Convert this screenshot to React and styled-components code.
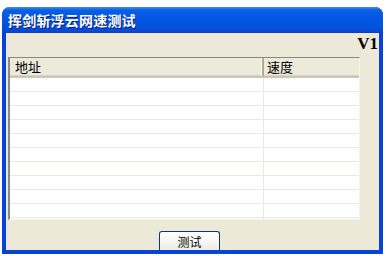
import React from 'react';
import styled, { createGlobalStyle } from 'styled-components';

const GlobalStyle = createGlobalStyle`
  html, body {
    margin: 0;
    background: #ffffff;
  }
  body {
    width: 386px;
    height: 256px;
    overflow: hidden;
    font-family: "Noto Sans CJK SC", "Noto Sans", sans-serif;
  }
`;

const Page = styled.div`
  padding: 7px 3px 2px 2px;
`;

const Window = styled.div`
  width: 381px;
  height: 247px;
  display: flex;
  flex-direction: column;
  border-radius: 8px 8px 0 0;
  background: #0842d6;
  overflow: hidden;
`;

const TitleBar = styled.div`
  height: 26px;
  flex: none;
  display: flex;
  align-items: center;
  padding: 0 6px;
  background: linear-gradient(
    to bottom,
    #3d8cf6 0%,
    #0a5fe6 12%,
    #0256e0 45%,
    #0053de 70%,
    #0a4ad4 92%,
    #0b3dbd 100%
  );
`;

const Title = styled.span`
  color: #ffffff;
  font-size: 14px;
  font-weight: bold;
  letter-spacing: 0.2px;
  text-shadow: 1px 1px 0 #0a1e74;
  font-family: "Noto Sans CJK SC", sans-serif;
`;

const Client = styled.div`
  flex: 1;
  margin: 0 4px 4px 4px;
  background: #ece9d8;
  display: flex;
  flex-direction: column;
`;

const VersionRow = styled.div`
  display: flex;
  justify-content: flex-end;
  height: 24px;
  padding-right: 1px;
`;

const Version = styled.span`
  font-family: "Liberation Serif", "DejaVu Serif", serif;
  font-weight: bold;
  font-size: 17px;
  line-height: 22px;
  color: #000000;
`;

const ListView = styled.div`
  margin-left: 2px;
  width: 352px;
  height: 163px;
  background: #ffffff;
  border-top: 1px solid #8c8a80;
  border-left: 2px solid #8c8a80;
  border-right: 1px solid #f4f3ee;
  border-bottom: 1px solid #f4f3ee;
  box-sizing: border-box;
  overflow: hidden;
`;

const HeaderRow = styled.div`
  display: grid;
  grid-template-columns: 254px 1fr;
  height: 18px;
  background: #ebeadb;
  border-bottom: 2px solid #cbc7b8;
  box-shadow: inset 0 -1px 0 #d6d2c2;
`;

const HeaderCell = styled.div`
  font-size: 13px;
  line-height: 18px;
  padding-left: ${p => p.$pad || 4}px;
  color: #000000;
  border-right: ${p => (p.$divider ? '2px solid #aca899' : 'none')};
  box-shadow: ${p => (p.$divider ? 'inset -1px 0 0 #ffffff' : 'none')};
`;

const Row = styled.div`
  display: grid;
  grid-template-columns: 254px 1fr;
  height: 13px;
  border-bottom: 1px solid #e9e8e2;
`;

const Cell = styled.div`
  border-right: ${p => (p.$divider ? '1px solid #e9e8e2' : 'none')};
`;

const ButtonBar = styled.div`
  flex: 1;
  display: flex;
  align-items: flex-end;
  padding-left: 153px;
`;

const Button = styled.button`
  width: 61px;
  height: 19px;
  padding: 0;
  border: 1px solid #003c74;
  border-bottom: none;
  border-radius: 3px 3px 0 0;
  background: linear-gradient(to bottom, #ffffff 0%, #f6f5f0 60%, #ecebe4 100%);
  font-family: "Noto Sans CJK SC", sans-serif;
  font-size: 12px;
  line-height: 17px;
  color: #000000;
`;

const rows = Array.from({ length: 11 });

export default function App() {
  return (
    <Page>
      <GlobalStyle />
      <Window>
        <TitleBar>
          <Title>挥剑斩浮云网速测试</Title>
        </TitleBar>
        <Client>
          <VersionRow>
            <Version>V1</Version>
          </VersionRow>
          <ListView>
            <HeaderRow>
              <HeaderCell $divider $pad={5}>地址</HeaderCell>
              <HeaderCell $pad={3}>速度</HeaderCell>
            </HeaderRow>
            {rows.map((_, i) => (
              <Row key={i}>
                <Cell $divider />
                <Cell />
              </Row>
            ))}
          </ListView>
          <ButtonBar>
            <Button>测试</Button>
          </ButtonBar>
        </Client>
      </Window>
    </Page>
  );
}
